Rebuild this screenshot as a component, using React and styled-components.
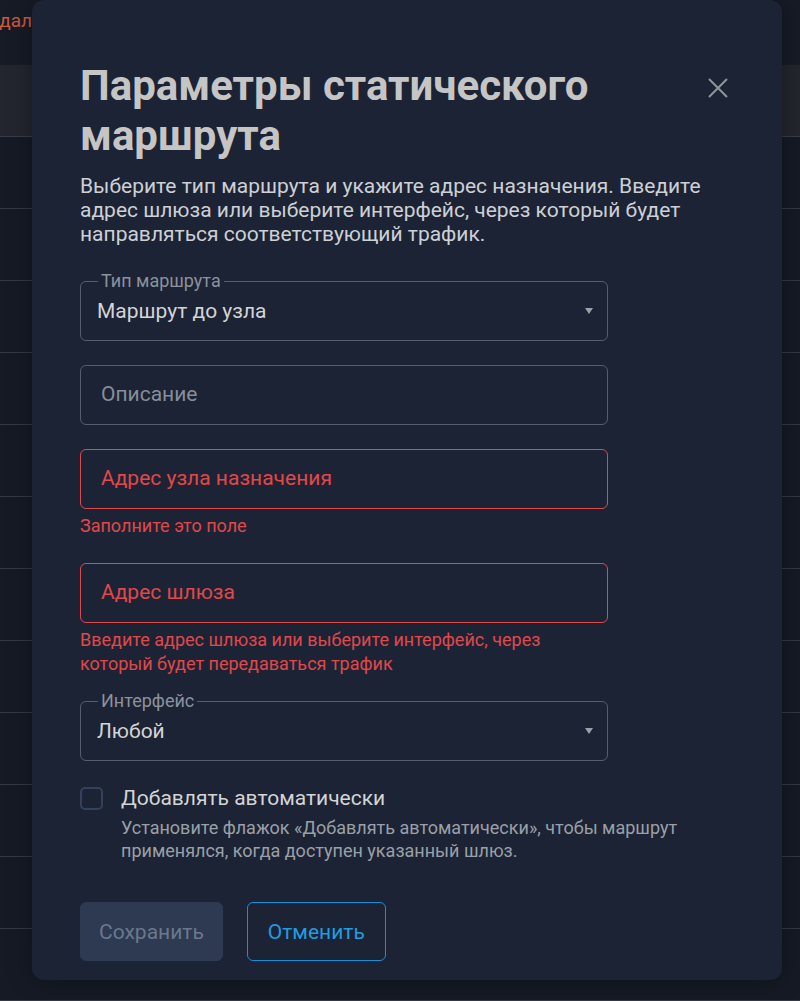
import React from 'react'
import styled, { createGlobalStyle } from 'styled-components'

const GlobalStyle = createGlobalStyle`
    * {
        box-sizing: border-box;
    }
    html, body {
        margin: 0;
        padding: 0;
        background-color: #151a25;
        font-family: Roboto, "Noto Sans", "Liberation Sans", sans-serif;
    }
`;

const Page = styled.div`
    position: relative;
    width: 800px;
    height: 1001px;
    overflow: hidden;
    background-color: #151a25;
`;

const TopBar = styled.div`
    height: 65px;
    display: flex;
    align-items: center;
    padding-bottom: 25px;
    background-color: #161b26;
`;

const DeleteLink = styled.span`
    margin-left: -12px;
    font-size: 19px;
    color: #d0583c;
`;

const TableHead = styled.div`
    height: 72px;
    background-color: #23262e;
    border-bottom: 1px solid #3a3d46;
`;

const TableRow = styled.div`
    height: 72px;
    border-bottom: 1px solid #353943;
`;

const Modal = styled.div`
    position: absolute;
    top: 0;
    left: 32px;
    width: 750px;
    padding: 61px 48px 19px;
    background-color: #1c2334;
    border-radius: 12px;
    box-shadow: 0 0 24px rgba(0, 0, 0, 0.35);
`;

const Header = styled.div`
    display: flex;
    align-items: flex-start;
    justify-content: space-between;
    gap: 16px;
`;

const Title = styled.h2`
    margin: 0;
    font-size: 42px;
    line-height: 50px;
    font-weight: 700;
    color: #c5c5c5;
`;

const CloseButton = styled.button`
    flex: none;
    width: 32px;
    height: 32px;
    margin-top: 11px;
    padding: 0;
    display: flex;
    align-items: center;
    justify-content: center;
    background: none;
    border: none;
    color: #8e949b;
    cursor: pointer;
`;

const Description = styled.p`
    margin: 13px 0 0;
    font-size: 21px;
    line-height: 24px;
    color: #cdd0d4;
`;

const Form = styled.div`
    margin-top: 35px;
    width: 528px;
    display: flex;
    flex-direction: column;
    gap: 24px;
`;

const Group = styled.div`
    display: flex;
    flex-direction: column;
`;

const Field = styled.div`
    position: relative;
    height: 60px;
    display: flex;
    align-items: center;
    padding: 0 14px 0 ${({ $select }) => ($select ? '16px' : '20px')};
    border: 1px solid ${({ $error }) => ($error ? '#e0484b' : '#565e6d')};
    border-radius: 6px;
`;

const FloatLabel = styled.span`
    position: absolute;
    top: -12px;
    left: 17px;
    padding: 0 3px;
    font-size: 18px;
    line-height: 22px;
    color: #8b929c;
    background-color: #1c2334;
`;

const Value = styled.span`
    flex: 1;
    font-size: 21px;
    margin-top: ${({ $placeholder, $error }) => ($placeholder || $error ? '-3px' : '0')};
    color: ${({ $placeholder, $error }) =>
        $error ? '#e0484b' : $placeholder ? '#868e9a' : '#d3d4d6'};
`;

const Arrow = styled.span`
    width: 0;
    height: 0;
    border-left: 4.5px solid transparent;
    border-right: 4.5px solid transparent;
    border-top: 6px solid #9aa0a8;
`;

const Helper = styled.div`
    margin: 5px 0 1px;
    font-size: 18px;
    line-height: 24px;
    color: #e0484b;
`;

const CheckRow = styled.div`
    margin-top: 25px;
    display: flex;
    gap: 18px;
`;

const Box = styled.span`
    flex: none;
    width: 23px;
    height: 23px;
    margin-top: 1px;
    border: 2px solid #33415d;
    border-radius: 5px;
`;

const CheckText = styled.div`
    display: flex;
    flex-direction: column;
`;

const CheckLabel = styled.span`
    font-size: 21px;
    line-height: 24px;
    color: #d3d4d6;
`;

const CheckHint = styled.span`
    margin-top: 6px;
    font-size: 18px;
    line-height: 23px;
    color: #9aa0a7;
`;

const Actions = styled.div`
    margin-top: 40px;
    display: flex;
    gap: 24px;
`;

const Button = styled.button`
    height: 59px;
    padding: 0 ${({ $primary }) => ($primary ? '18px' : '20px')};
    font-family: inherit;
    font-size: 21px;
    border-radius: 6px;
    background-color: ${({ $primary }) => ($primary ? '#2d3a52' : 'transparent')};
    color: ${({ $primary }) => ($primary ? '#6b788b' : '#1f9de2')};
    border: 1px solid ${({ $primary }) => ($primary ? '#2d3a52' : '#1790d8')};
`;

const rows = Array.from({ length: 12 })

const App = () => {
    return (
        <Page>
            <GlobalStyle />
            <TopBar>
                <DeleteLink>Удалить</DeleteLink>
            </TopBar>
            <TableHead />
            {rows.map((_, i) => (
                <TableRow key={i} />
            ))}

            <Modal>
                <Header>
                    <Title>Параметры статического маршрута</Title>
                    <CloseButton>
                        <svg width="20" height="20" viewBox="0 0 20 20">
                            <path d="M1 1 L19 19 M19 1 L1 19" stroke="currentColor" strokeWidth="2" />
                        </svg>
                    </CloseButton>
                </Header>
                <Description>
                    Выберите тип маршрута и укажите адрес назначения. Введите адрес шлюза или выберите
                    интерфейс, через который будет направляться соответствующий трафик.
                </Description>

                <Form>
                    <Field $select>
                        <FloatLabel>Тип маршрута</FloatLabel>
                        <Value>Маршрут до узла</Value>
                        <Arrow />
                    </Field>
                    <Field>
                        <Value $placeholder>Описание</Value>
                    </Field>
                    <Group>
                        <Field $error>
                            <Value $error>Адрес узла назначения</Value>
                        </Field>
                        <Helper>Заполните это поле</Helper>
                    </Group>
                    <Group>
                        <Field $error>
                            <Value $error>Адрес шлюза</Value>
                        </Field>
                        <Helper>
                            Введите адрес шлюза или выберите интерфейс, через который будет передаваться трафик
                        </Helper>
                    </Group>
                    <Field $select>
                        <FloatLabel>Интерфейс</FloatLabel>
                        <Value>Любой</Value>
                        <Arrow />
                    </Field>
                </Form>

                <CheckRow>
                    <Box />
                    <CheckText>
                        <CheckLabel>Добавлять автоматически</CheckLabel>
                        <CheckHint>
                            Установите флажок «Добавлять автоматически», чтобы маршрут применялся, когда
                            доступен указанный шлюз.
                        </CheckHint>
                    </CheckText>
                </CheckRow>

                <Actions>
                    <Button $primary>Сохранить</Button>
                    <Button>Отменить</Button>
                </Actions>
            </Modal>
        </Page>
    )
}

export default App
